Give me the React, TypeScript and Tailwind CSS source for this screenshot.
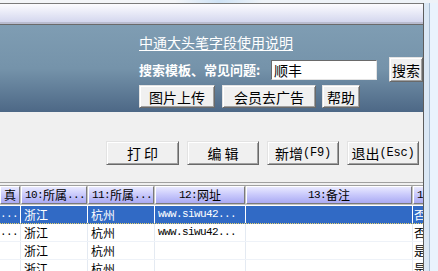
import React from 'react';

const cjk = '"Noto Sans CJK SC", "Noto Sans", sans-serif';

// half-width latin in a SimSun-like grid
function M({ children, size = 'text-[12px] tracking-[-0.2px]' }: { children: React.ReactNode; size?: string }) {
    return <span className={`font-['Liberation_Mono',monospace] ${size}`}>{children}</span>;
}

function WinButton({ className, children }: { className: string; children: React.ReactNode }) {
    return (
        <div
            className={`flex shrink-0 items-center justify-center bg-[#f0f0f0] border border-t-[#e3e3e3] border-l-[#e3e3e3] border-r-[#696969] border-b-[#696969] shadow-[inset_1px_1px_0_#ffffff,inset_-1px_-1px_0_#a0a0a0] text-[14px] leading-none text-black ${className}`}
        >
            {children}
        </div>
    );
}

const cols = [20, 67, 67, 91, 167, 11];

function HeaderCell({ w, children, align = 'justify-start' }: { w: number; children?: React.ReactNode; align?: string }) {
    return (
        <div
            style={{ width: w }}
            className={`shrink-0 h-[18px] flex items-center ${align} overflow-hidden whitespace-nowrap border-t border-l border-t-white border-l-white border-r border-b border-r-[#7a7a7a] border-b-[#7a7a7a] bg-gradient-to-b from-[#e9e9ff] via-[#c8c8fb] to-[#aaaaf3] text-[12px] text-black px-[3px]`}
        >
            {children}
        </div>
    );
}

type Row = { c0: string; prov: string; city: string; url: string; flag: string };

const rows: Row[] = [
    { c0: '...', prov: '浙江', city: '杭州', url: 'www.siwu42...', flag: '否' },
    { c0: '...', prov: '浙江', city: '杭州', url: 'www.siwu42...', flag: '否' },
    { c0: '', prov: '浙江', city: '杭州', url: '', flag: '是' },
    { c0: '', prov: '浙江', city: '杭州', url: '', flag: '是' },
];

function BodyRow({ r, selected }: { r: Row; selected: boolean }) {
    const cell = selected ? 'border-r border-r-white' : 'border-r border-r-[#e4eaf2]';
    const txt = selected ? 'text-white' : 'text-black';
    return (
        <div
            className={`flex h-[18px] shrink-0 ${selected ? 'bg-[#316ac5] border-b border-dotted border-b-[#e8d36a]' : 'bg-white border-b border-b-[#eef2f8]'} ${txt} text-[12px] leading-none`}
        >
            <div style={{ width: cols[0] + 1 }} className={`shrink-0 flex items-center justify-end pr-[2px] ${cell}`}>
                <M size="text-[11px] tracking-[-0.6px]">{r.c0}</M>
            </div>
            <div style={{ width: cols[1] }} className={`shrink-0 flex items-center pl-[3px] ${cell}`}>{r.prov}</div>
            <div style={{ width: cols[2] }} className={`shrink-0 flex items-center pl-[3px] ${cell}`}>{r.city}</div>
            <div style={{ width: cols[3] }} className={`shrink-0 flex items-center pl-[3px] overflow-hidden whitespace-nowrap ${cell}`}>
                <M size="text-[11px] tracking-[-0.6px]">{r.url}</M>
            </div>
            <div style={{ width: cols[4] }} className={`shrink-0 ${cell}`} />
            <div className="flex-1 flex items-center pl-[1px] overflow-hidden whitespace-nowrap">{r.flag}</div>
        </div>
    );
}

export default function App() {
    return (
        <div className="w-[438px] h-[271px] overflow-hidden flex flex-col bg-[#eaf3fc]" style={{ fontFamily: cjk }}>
            {/* window frame top */}
            <div className="h-[3px] shrink-0 bg-gradient-to-r from-[#f3f5f8] from-40% via-[#cfe3f5] via-50% to-[#eef3f8] to-60%" />

            <div className="flex flex-1 min-h-0">
                <div className="w-[423px] shrink-0 flex flex-col bg-[#f0f0f0]">
                    {/* toolbar strip */}
                    <div className="h-[19px] shrink-0 border-t border-t-[#7a7a7a] bg-gradient-to-b from-[#fcfcff] to-[#d4d7ee]" />
                    <div className="h-[2px] shrink-0 bg-[#b9bccf]" />
                    <div className="h-px shrink-0 bg-[#6a6a6a]" />

                    {/* blue panel */}
                    <div className="h-[87px] shrink-0 pl-[139px] flex flex-col bg-gradient-to-b from-[#7f9db3] via-[#7593aa] to-[#4d6886]">
                        <div className="mt-[8px] h-[17px] flex items-center">
                            <span className="text-[14px] leading-none text-white underline underline-offset-2">中通大头笔字段使用说明</span>
                        </div>
                        <div className="mt-[7px] h-[25px] flex items-center">
                            <span className="text-[13px] font-bold text-white leading-none w-[132px] shrink-0">搜索模板、常见问题:</span>
                            <div className="w-[106px] h-[20px] shrink-0 bg-white border border-t-[#6a6a6a] border-l-[#6a6a6a] border-r-[#e3e3e3] border-b-[#e3e3e3] flex items-center pl-[2px] text-[14px] leading-none text-black">
                                顺丰
                            </div>
                            <WinButton className="ml-[12px] w-[34px] h-[25px]">搜索</WinButton>
                        </div>
                        <div className="mt-[3px] h-[23px] flex gap-[7px]">
                            <WinButton className="w-[76px] h-[23px]">图片上传</WinButton>
                            <WinButton className="w-[94px] h-[23px]">会员去广告</WinButton>
                            <WinButton className="w-[38px] h-[23px] -ml-px">帮助</WinButton>
                        </div>
                    </div>

                    {/* action buttons */}
                    <div className="h-[70px] shrink-0 pt-[29px] pr-[4px] flex justify-end items-start gap-[8px]">
                        <WinButton className="w-[73px] h-[24px]">打&nbsp;印</WinButton>
                        <WinButton className="w-[72px] h-[24px]">编&nbsp;辑</WinButton>
                        <WinButton className="w-[72px] h-[24px]">新增<M>(F9)</M></WinButton>
                        <WinButton className="w-[72px] h-[24px]">退出<M>(Esc)</M></WinButton>
                    </div>
                    <div className="h-px shrink-0 bg-[#a0a0a0]" />
                    <div className="h-[2px] shrink-0 bg-[#f0f0f0]" />

                    {/* grid */}
                    <div className="flex-1 flex flex-col border-t border-t-[#a0a0a0] bg-white overflow-hidden">
                        <div className="flex shrink-0 gap-px bg-[#c4c4c4] pb-px">
                            <HeaderCell w={cols[0]} align="justify-end">真</HeaderCell>
                            <HeaderCell w={cols[1] - 1}><M size="text-[11px] tracking-[-0.6px]">10:</M>所属<M size="text-[11px] tracking-[-0.6px]">...</M></HeaderCell>
                            <HeaderCell w={cols[2] - 1}><M size="text-[11px] tracking-[-0.6px]">11:</M>所属<M size="text-[11px] tracking-[-0.6px]">...</M></HeaderCell>
                            <HeaderCell w={cols[3] - 1} align="justify-center"><M size="text-[11px] tracking-[-0.6px]">12:</M>网址</HeaderCell>
                            <HeaderCell w={cols[4] - 1} align="justify-center"><M size="text-[11px] tracking-[-0.6px]">13:</M>备注</HeaderCell>
                            <HeaderCell w={14}><M size="text-[11px] tracking-[-0.6px]">14</M></HeaderCell>
                        </div>
                        <div className="h-px shrink-0 bg-white" />
                        {rows.map((r, i) => (
                            <BodyRow key={i} r={r} selected={i === 0} />
                        ))}
                    </div>
                </div>

                {/* window frame right */}
                <div className="flex-1 flex border-l border-l-[#5d5d5d]">
                    <div className="w-[5px] bg-[#dbe8f5]" />
                    <div className="w-px bg-[#a9bdd2]" />
                    <div className="flex-1 bg-[#eaf3fc]" />
                </div>
            </div>
        </div>
    );
}
